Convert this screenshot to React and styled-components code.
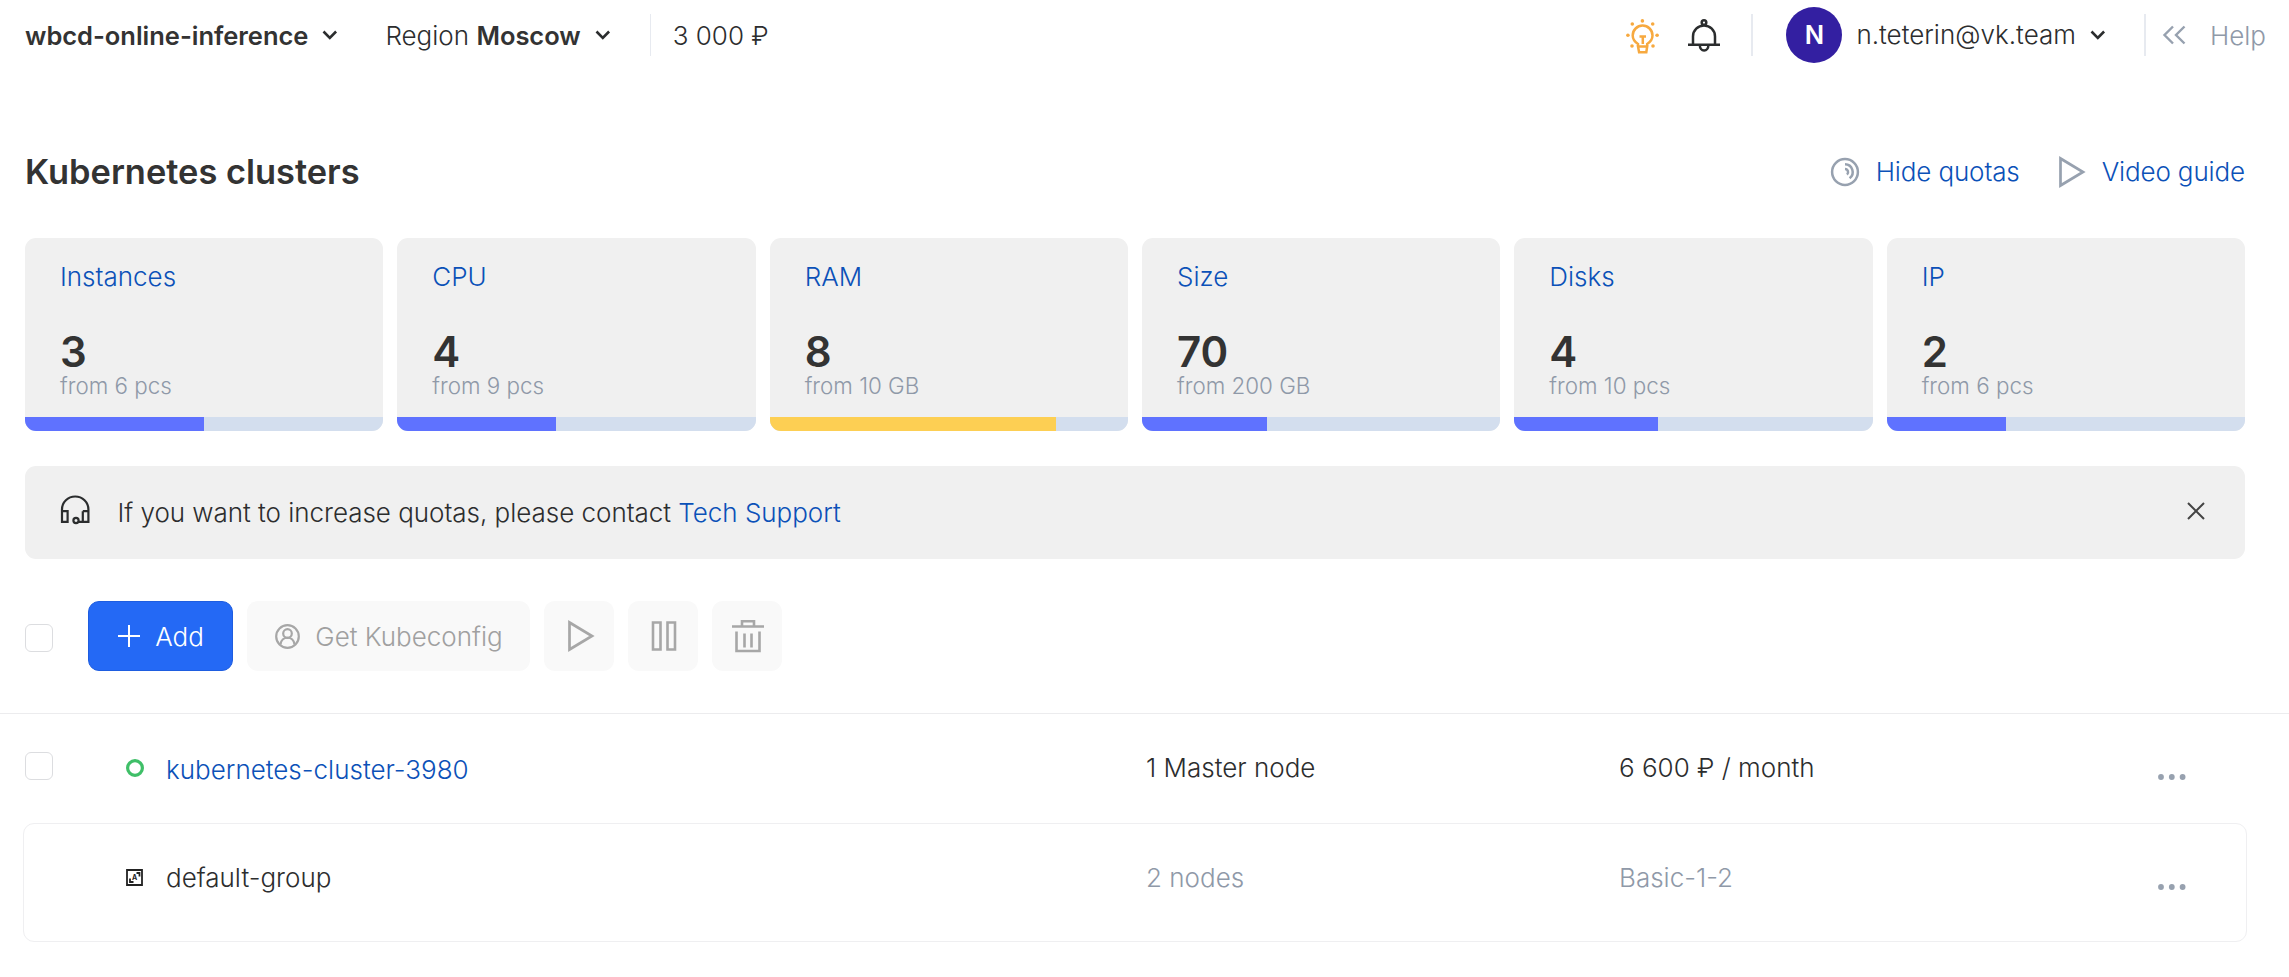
import React from 'react';
import styled, { createGlobalStyle } from 'styled-components';

const Global = createGlobalStyle`
  *{box-sizing:border-box}
  body{margin:0;background:#fff;color:#2c2d2e;font:300 26px/32px Inter,"Liberation Sans",sans-serif;overflow:hidden}
  #root{height:977px}
  svg{display:block;flex:none}
`;
const Page = styled.div`width:100%;height:977px;display:flex;flex-direction:column;`;
const Header = styled.header`height:70px;display:flex;align-items:center;padding:0 23px 0 25px;`;
const Picker = styled.div`display:flex;align-items:center;gap:14px;margin-right:${p => p.$mr}px;`;
const Label = styled.span`white-space:nowrap;color:${p => p.$c || 'inherit'};padding-top:${p => p.$down || 0}px;`;
const Strong = styled.b`font-weight:600;font-size:25.5px;letter-spacing:-0.02px;white-space:nowrap;color:#333;`;
const Rule = styled.i`width:${p => p.$w || 1}px;height:42px;flex:none;background:#e7eaf0;`;
const Spacer = styled.div`flex:1;`;
const Avatar = styled.div`width:56px;height:56px;flex:none;border-radius:50%;background:#331fa1;color:#fff;display:grid;place-items:center;font-weight:600;font-size:25.5px;margin:0 14px 0 33px;`;
const Title = styled.div`height:56px;margin:74px 44px 0 25px;display:flex;align-items:center;`;
const H1 = styled.h1`font-size:34.4px;line-height:44px;font-weight:600;margin:0;color:#333;`;
const Link = styled.a`color:#0b51b8;white-space:nowrap;`;
const ActionLink = styled(Link)`letter-spacing:-0.13px;`;
const Cards = styled.section`display:grid;grid-template-columns:repeat(6,1fr);gap:14px;margin:38px 44px 0 25px;`;
const Card = styled.article`height:193px;background:#f0f0f0;border-radius:11px;overflow:hidden;display:flex;flex-direction:column;padding-top:23px;`;
const CardBody = styled.div`flex:1;padding:0 35px;display:flex;flex-direction:column;`;
const Amount = styled.strong`font-size:42px;font-weight:600;line-height:40px;margin-top:39px;color:#333;`;
const Limit = styled.span`color:#8f99a8;font-size:22.4px;line-height:28px;`;
const Track = styled.div`height:14px;background:#d3deee;`;
const Bar = styled.div`height:14px;background:${p => p.$warn ? '#fdcf53' : '#5f72ff'};`;
const Notice = styled.section`height:93px;margin:35px 44px 0 25px;background:#f0f0f0;border-radius:11px;display:flex;align-items:center;padding:0 38px 0 35px;`;
const NoticeText = styled.span`white-space:nowrap;letter-spacing:-0.03px;`;
const Toolbar = styled.section`height:155px;padding:42px 25px 0;border-bottom:1px solid #ececee;display:flex;align-items:flex-start;gap:14px;`;
const Check = styled.div`width:28px;height:28px;flex:none;border:1px solid #dcdde0;border-radius:6px;`;
const ToolCheck = styled(Check)`margin:23px 21px 0 0;`;
const Button = styled.button`height:70px;width:${p => p.$w}px;flex:none;border:0;border-radius:11px;background:#f9f9f9;color:#a0a0a0;font:inherit;padding:0 0 0 ${p => p.$pl || 0}px;display:flex;align-items:center;justify-content:center;gap:15px;
  ${p => p.$primary && 'background:#2469f5;color:#fff;border:1px solid #1e5de0;'}`;
const Row = styled.div`display:grid;grid-template-columns:101px 40px 980px 473px 1fr auto;height:109px;padding-left:25px;padding-right:103px;`;
const Group = styled(Row)`height:119px;margin:0 42px 0 23px;border:1px solid #efeff1;border-radius:11px;padding:0 60px 0 1px;`;
const Cell = styled.div`padding-top:${p => p.$t}px;white-space:nowrap;color:${p => p.$c || 'inherit'};`;
const Slot = styled.span`padding-top:${p => p.$t || 0}px;padding-bottom:${p => p.$b || 0}px;margin-left:${p => p.$l || 0}px;margin-right:${p => p.$r || 0}px;`;

const Chevron = () => <svg width="16" height="10" viewBox="0 0 16 10" fill="none" stroke="#2b2d2e" strokeWidth="2.6"><path d="M1.500 1.500l6.300 6.300 6.300-6.300" /></svg>;
const Dots = () => <svg width="28" height="6" fill="#97a1af"><circle cx="3" cy="3" r="2.9" /><circle cx="13.8" cy="3" r="2.9" /><circle cx="24.6" cy="3" r="2.9" /></svg>;
const Play = ({ c }) => <svg width="28" height="32" viewBox="0 0 28 32" fill="none" stroke={c} strokeWidth="2.7"><path d="M2.5 2.5v27L25 16z" /></svg>;
const Bulb = () => (
  <svg width="33" height="35" viewBox="0 0 33 35" fill="none" stroke="#f7a93f" strokeWidth="2.5">
    <path d="M12 28v-3c-3-2-5.300-5-5.300-8.500a9.900 9.900 0 0 1 19.800 0c0 3.500-2.400 6.500-5.300 8.500v3M12 27.500h9.200l-.9 5.800h-7.200zM13.500 17.500h6.500M16.800 17.500v7.500" />
    <g fill="#f7a93f" stroke="none"><circle cx="16.400" cy="1.900" r="1.800" /><circle cx="6.300" cy="5" r="1.800" /><circle cx="26.700" cy="5" r="1.800" /><circle cx="1.900" cy="16.300" r="1.800" /><circle cx="31.100" cy="16.300" r="1.800" /><circle cx="6" cy="27" r="1.800" /><circle cx="27" cy="27" r="1.800" /></g>
  </svg>
);
const Bell = () => (
  <svg width="32" height="34" viewBox="0 0 32 34" fill="none" stroke="#2b2d2e" strokeWidth="2.500">
    <path d="M0 25.700h32M5 25V17.500a11 11 0 0 1 22 0V25M11.800 26a4.300 5.500 0 0 0 8.600 0" /><circle cx="16" cy="3.600" r="2.300" />
  </svg>
);
const Headset = () => (
  <svg width="30" height="30" viewBox="0 0 30 30" fill="none" stroke="#2b2d2e" strokeWidth="2.200">
    <path d="M2 17v-2.500a13.200 13 0 0 1 26.400 0V17M2 16.200h5.600v10.600H2zM22.800 16.200h5.600v10.600h-5.600M22.800 16.200v10.600M19 26.800h4" /><circle cx="16" cy="25.500" r="2.600" />
  </svg>
);

const quotas = [
  ['Instances', '3', 'from 6 pcs', 50], ['CPU', '4', 'from 9 pcs', 44.4], ['RAM', '8', 'from 10 GB', 80, true],
  ['Size', '70', 'from 200 GB', 35], ['Disks', '4', 'from 10 pcs', 40], ['IP', '2', 'from 6 pcs', 33.3],
];

export default function App() {
  return (
    <Page>
      <Global />
      <Header>
        <Picker $mr={47}><Label $down={2}><Strong>wbcd-online-inference</Strong></Label><Chevron /></Picker>
        <Picker $mr={39}><Label $down={2}>Region <Strong>Moscow</Strong></Label><Chevron /></Picker>
        <Rule /><Slot $r={22} /><Label $down={2}>3 000 ₽</Label>
        <Spacer />
        <Slot $r={29} $t={2}><Bulb /></Slot><Slot $r={31} $t={1}><Bell /></Slot>
        <Rule $w={2} />
        <Avatar>N</Avatar>
        <Label>n.teterin@vk.team</Label><Slot $l={14} $r={38}><Chevron /></Slot>
        <Rule $w={2} />
        <Slot $l={16} $r={24}><svg width="24" height="20" viewBox="0 0 24 20" fill="none" stroke="#97a1af" strokeWidth="2.400"><path d="M11 1.500L2.500 10l8.500 8.500M22.500 1.500L14 10l8.500 8.500" /></svg></Slot>
        <Label $c="#8f99a8" $down={2}>Help</Label>
      </Header>
      <Title>
        <H1>Kubernetes clusters</H1><Spacer />
        <Slot $r={16}><svg width="30" height="30" viewBox="0 0 30 30" fill="none" stroke="#97a1af" strokeWidth="2.500"><circle cx="15" cy="15" r="12.900" /><path d="M15 7.300a7.800 7.800 0 0 1 4.600 14M15 12a3.200 3.200 0 0 1 2 5.600" /></svg></Slot>
        <ActionLink>Hide quotas</ActionLink>
        <Slot $l={38} $r={16}><Play c="#97a1af" /></Slot><ActionLink>Video guide</ActionLink>
      </Title>
      <Cards>
        {quotas.map(([name, n, of, pct, warn]) => (
          <Card key={name}>
            <CardBody><Link>{name}</Link><Amount>{n}</Amount><Limit>{of}</Limit></CardBody>
            <Track><Bar $warn={warn} style={{ width: pct + '%' }} /></Track>
          </Card>
        ))}
      </Cards>
      <Notice>
        <Slot $r={27.5} $b={6}><Headset /></Slot>
        <NoticeText>If you want to increase quotas, please contact <Link>Tech Support</Link></NoticeText>
        <Spacer />
        <Slot $b={3}><svg width="22" height="18" viewBox="0 0 22 18" fill="none" stroke="#444" strokeWidth="2"><path d="M3 1l16 16M19 1L3 17" /></svg></Slot>
      </Notice>
      <Toolbar>
        <ToolCheck />
        <Button $primary $w={145} $pl={1}><svg width="22" height="22" stroke="#fff" strokeWidth="2"><path d="M11 0v22M0 11h22" /></svg><Label $down={2}>Add</Label></Button>
        <Button $w={283} $pl={1}><svg width="25" height="25" viewBox="0 0 25 25" fill="none" stroke="#a7a7a7" strokeWidth="2.200"><circle cx="12.500" cy="12.500" r="11.300" /><circle cx="12.500" cy="9.500" r="4.300" /><path d="M5.500 20.500c1-9 13-9 14 0" /></svg><Label $down={2}>Get Kubeconfig</Label></Button>
        <Button $w={70} $pl={3}><Play c="#a7a7a7" /></Button>
        <Button $w={70} $pl={1}><svg width="26" height="30" fill="none" stroke="#a7a7a7" strokeWidth="2.600"><path d="M2 1.500h7.500v27H2zM16.500 1.500H24v27h-7.500z" /></svg></Button>
        <Button $w={70} $pl={1}><svg width="32" height="34" fill="none" stroke="#a7a7a7" strokeWidth="2.600"><path d="M0 7.500h32M10 7.300V2.300h12v5M4.500 12.500v19.500h23V12.500M12.500 14.500v14M19.500 14.500v14" /></svg></Button>
      </Toolbar>
      <Row>
        <Cell $t={38}><Check /></Cell>
        <Cell $t={44.5}><svg width="18" height="18" fill="none" stroke="#3fbf68" strokeWidth="3.200"><circle cx="9" cy="9" r="7.400" /></svg></Cell>
        <Cell $t={40}><Link>kubernetes-cluster-3980</Link></Cell>
        <Cell $t={38}>1 Master node</Cell><Cell $t={38}>6 600 ₽ / month</Cell>
        <Cell $t={60}><Dots /></Cell>
      </Row>
      <Group>
        <span />
        <Cell $t={45}><svg width="17" height="17" fill="none" stroke="#222" strokeWidth="1.800"><path d="M1 1h15v15H1zM10.500 4h3v3.500M4 9.500v3.500h3.500" /><text x="8.500" y="11" textAnchor="middle" fontSize="7" fontWeight="700" fill="#222" stroke="none">A</text></svg></Cell>
        <Cell $t={38}>default-group</Cell>
        <Cell $t={38} $c="#8f99a8">2 nodes</Cell><Cell $t={38} $c="#8f99a8">Basic-1-2</Cell>
        <Cell $t={60}><Dots /></Cell>
      </Group>
    </Page>
  );
}
